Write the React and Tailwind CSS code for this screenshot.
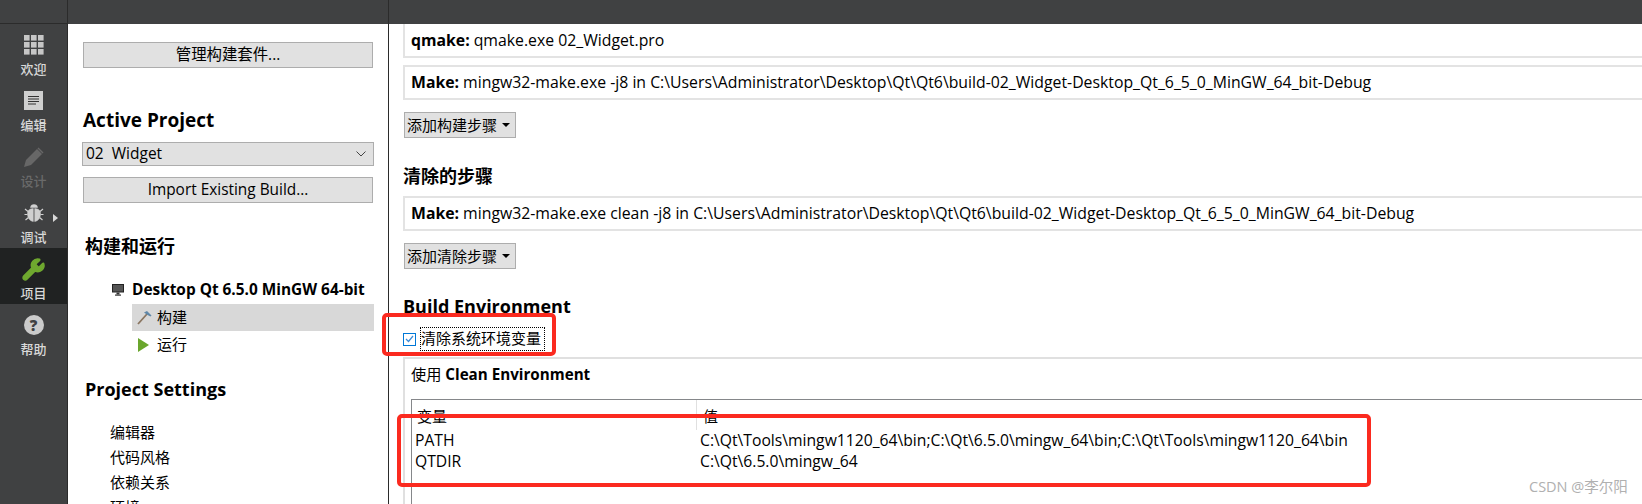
import { Wrench } from 'lucide-react'

// ── Sidebar icons ──────────────────────────────────────────────
function GridIcon() {
  const cells = [0, 7, 14]
  return (
    <svg width="20" height="20" viewBox="0 0 20 20" fill="#c6c6c6">
      {cells.map((y) => cells.map((x) => <rect key={`${x}-${y}`} x={x} y={y} width="5.6" height="5.6" />))}
    </svg>
  )
}

function EditIcon() {
  return (
    <svg width="20" height="20" viewBox="0 0 20 20">
      <rect width="19" height="19" fill="#cfcfcf" />
      <path d="M4 5.5h11M4 8h11M4 10.5h11M4 13h8" stroke="#333" strokeWidth="1" />
    </svg>
  )
}

function PencilIcon() {
  return (
    <svg width="20" height="20" viewBox="0 0 20 20" fill="#676767">
      <path d="M0 20l2-7L13 2l5 5L7 18z" />
      <path d="M14.5 0.5l5 5-1 1-5-5z" />
    </svg>
  )
}

function BugIcon() {
  return (
    <svg width="20" height="20" viewBox="0 0 20 20" fill="#d0d0d0" stroke="#d0d0d0">
      <path d="M6.5 4.5a3.5 3 0 0 1 7 0z" strokeWidth="0.5" />
      <path d="M9.3 5.5v13C6 18 3.5 15 3.5 11S5 6 9.3 5.5z" strokeWidth="0.5" />
      <path d="M10.7 5.5v13c3.300-.5 5.800-3.500 5.800-7.500S15 6 10.700 5.500z" strokeWidth="0.5" />
      <path d="M1 6l3 2.500M19 6l-3 2.500M0.500 11.500h3M19.500 11.500h-3M1.500 17l3-2.500M18.500 17l-3-2.500" strokeWidth="1.200" fill="none" />
    </svg>
  )
}

function NavItem({ icon, label, active, disabled, arrow }) {
  return (
    <div
      className={[
        'relative flex h-14 flex-col items-center pt-[11px]',
        active ? 'bg-[#202222]' : '',
      ].join(' ')}
    >
      <div className="flex h-5 w-5 items-center justify-center">{icon}</div>
      <span
        className={[
          'mt-[5px] text-[13px] leading-[18px] font-medium',
          disabled ? 'text-[#6a6a6a]' : 'text-[#d8d8d8]',
        ].join(' ')}
      >
        {label}
      </span>
      {arrow && (
        <span className="absolute top-[22px] left-[53px] h-0 w-0 border-y-[4px] border-l-[5px] border-y-transparent border-l-[#d8d8d8]" />
      )}
    </div>
  )
}

function QtButton({ children, className }) {
  return (
    <div
      className={[
        'flex items-center justify-center border border-[#adadad] bg-[#e1e1e1] text-[15.4px] text-black',
        className,
      ].join(' ')}
    >
      {children}
    </div>
  )
}

function MenuButton({ label }) {
  return (
    <div className="ml-px flex h-[26px] w-[112px] items-center gap-[5px] border border-[#adadad] bg-[#e1e1e1] pl-[2px] text-[15px] text-black">
      <span>{label}</span>
      <span className="h-0 w-0 border-x-[4px] border-t-[4px] border-x-transparent border-t-black" />
    </div>
  )
}

function StepBox({ name, text, className }) {
  return (
    <div
      className={[
        'flex items-center border-2 border-r-0 border-[#e3e3e3] pl-[6px] text-[15.8px] whitespace-nowrap text-black',
        className,
      ].join(' ')}
    >
      <b className="mr-[4px] font-bold">{name}</b>
      <span>{text}</span>
    </div>
  )
}

const SETTINGS = ['编辑器', '代码风格', '依赖关系', '环境']

export default function App() {
  return (
    <div className="relative flex h-[504px] w-[1642px] flex-col overflow-hidden bg-white font-['Open_Sans','Noto_Sans_CJK_SC',sans-serif] text-black">
      {/* ── Top bar ─────────────────────────────────────────────── */}
      <div className="flex h-6 shrink-0 bg-[#404142]">
        <div className="h-6 w-[68px] border-r border-b border-[#2b2b2b]" />
        <div className="h-6 w-[321px] border-r border-[#2b2b2b]" />
      </div>

      <div className="flex min-h-0 flex-1">
        {/* ── Mode sidebar ────────────────────────────────────── */}
        <div className="w-[68px] shrink-0 border-r border-[#2b2b2b] bg-[#404142]">
          <NavItem icon={<GridIcon />} label="欢迎" />
          <NavItem icon={<EditIcon />} label="编辑" />
          <NavItem icon={<PencilIcon />} label="设计" disabled />
          <NavItem icon={<BugIcon />} label="调试" arrow />
          <NavItem
            icon={<Wrench size={25} strokeWidth={1.5} color="#6fa82f" fill="#6fa82f" className="shrink-0" />}
            label="项目"
            active
          />
          <NavItem
            icon={
              <div className="flex h-5 w-5 shrink-0 items-center justify-center rounded-full bg-[#cbcbcb] text-[15px] leading-none font-extrabold text-[#404142]">
                ?
              </div>
            }
            label="帮助"
          />
        </div>

        {/* ── Project panel ───────────────────────────────────── */}
        <div className="w-[321px] shrink-0 border-r border-[#2b2b2b] pl-[14px]">
          <QtButton className="mt-[18px] ml-px h-[26px] w-[290px]">管理构建套件...</QtButton>

          <div className="mt-[40px] ml-px text-[19px] leading-6 font-bold">Active Project</div>
          <div className="mt-[10px] flex h-6 w-[292px] items-center justify-between border border-[#adadad] bg-[#e1e1e1] pr-[7px] pl-[3px] text-[15.5px]">
            <span>02 &nbsp;Widget</span>
            <svg width="10" height="6" viewBox="0 0 10 6" fill="none" stroke="#444" strokeWidth="1">
              <path d="M0.500 0.500L5 5l4.500-4.500" />
            </svg>
          </div>
          <QtButton className="mt-[11px] ml-px h-[26px] w-[290px]">Import Existing Build...</QtButton>

          <div className="mt-[31px] ml-[3px] text-[18px] leading-6 font-bold">构建和运行</div>

          <div className="mt-[20px] flex h-6 items-center">
            <svg className="ml-[30px]" width="12" height="12" viewBox="0 0 12 12" fill="#333">
              <rect x="0.500" y="0.500" width="11" height="7.500" fill="#555" stroke="#222" />
              <rect x="4.500" y="8.500" width="3" height="2" />
              <rect x="3" y="10.500" width="6" height="1.200" />
            </svg>
            <span className="ml-2 text-[15.4px] font-bold whitespace-nowrap">Desktop Qt 6.5.0 MinGW 64-bit</span>
          </div>
          <div className="mt-[2px] ml-[50px] flex h-[27px] w-[242px] items-center bg-[#d8d8d8] pl-[5px] text-[15px]">
            <svg width="15" height="15" viewBox="0 0 15 15" fill="none">
              <path d="M1 14L10 4" stroke="#8a7560" strokeWidth="1.800" />
              <path d="M7 2.500l3-1.500 4.500 4.500-1 1-3-1.500z" fill="#5f87a8" />
            </svg>
            <span className="ml-[5px]">构建</span>
          </div>
          <div className="ml-[50px] flex h-[27px] items-center pl-[6px] text-[15px]">
            <span className="h-0 w-0 border-y-[7px] border-l-[11px] border-y-transparent border-l-[#6aa62d]" />
            <span className="ml-2">运行</span>
          </div>

          <div className="mt-[19px] ml-[3px] text-[18px] leading-6 font-bold">Project Settings</div>
          <div className="mt-[19px] ml-[28px]">
            {SETTINGS.map((s) => (
              <div key={s} className="h-[25px] text-[15px] leading-[25px]">
                {s}
              </div>
            ))}
          </div>
        </div>

        {/* ── Build settings ──────────────────────────────────── */}
        <div className="min-w-0 flex-1 pl-[14px]">
          <StepBox className="h-[34px] border-t-0 pt-[2px]" name="qmake:" text="qmake.exe 02_Widget.pro" />
          <StepBox
            className="mt-[7px] h-[35px]"
            name="Make:"
            text="mingw32-make.exe -j8 in C:\Users\Administrator\Desktop\Qt\Qt6\build-02_Widget-Desktop_Qt_6_5_0_MinGW_64_bit-Debug"
          />
          <div className="mt-3">
            <MenuButton label="添加构建步骤" />
          </div>

          <div className="mt-[26px] h-6 text-[18px] leading-6 font-bold">清除的步骤</div>
          <StepBox
            className="mt-[8px] h-[35px]"
            name="Make:"
            text="mingw32-make.exe clean -j8 in C:\Users\Administrator\Desktop\Qt\Qt6\build-02_Widget-Desktop_Qt_6_5_0_MinGW_64_bit-Debug"
          />
          <div className="mt-3">
            <MenuButton label="添加清除步骤" />
          </div>

          <div className="mt-[25px] h-6 text-[18px] leading-6 font-bold">Build Environment</div>
          <div className="mt-[9px] flex h-[24px] items-center">
            <div className="flex h-[13px] w-[13px] items-center justify-center border border-[#0078d7]">
              <svg width="9" height="8" viewBox="0 0 9 8" fill="none" stroke="#3a8ad6" strokeWidth="1.200">
                <path d="M1 4l2.500 2.500L8 1" />
              </svg>
            </div>
            <div className="ml-1 flex h-[24px] w-[125px] items-center border border-dotted border-black pb-px text-[15px] whitespace-nowrap">
              清除系统环境变量
            </div>
          </div>

          <div className="mt-[6px] border-t-2 border-l-2 border-[#e0e0e0] pl-[6px]">
            <div className="mt-[3px] h-[24px] text-[15.2px] leading-6">
              使用 <b className="font-bold">Clean Environment</b>
            </div>
            <div className="mt-[13px] h-[120px] border-t border-l border-[#85878a]">
              <div className="flex h-[30px] text-[15px]">
                <div className="w-[285px] border-r border-[#e0e0e0] pt-[6px] pl-[5px] leading-5">变量</div>
                <div className="pt-[6px] pl-[6px] leading-5">值</div>
              </div>
              <div className="flex h-[21px] text-[15.7px] leading-[21px] whitespace-nowrap">
                <div className="w-[288px] pl-[3px]">PATH</div>
                <div>C:\Qt\Tools\mingw1120_64\bin;C:\Qt\6.5.0\mingw_64\bin;C:\Qt\Tools\mingw1120_64\bin</div>
              </div>
              <div className="flex h-[21px] text-[15.7px] leading-[21px] whitespace-nowrap">
                <div className="w-[288px] pl-[3px]">QTDIR</div>
                <div>C:\Qt\6.5.0\mingw_64</div>
              </div>
            </div>
          </div>
        </div>
      </div>

      {/* ── Annotation overlays ─────────────────────────────────── */}
      <div className="absolute top-[313px] left-[382px] h-[43px] w-[174px] rounded-[5px] border-[4px] border-[#fb2a1f]" />
      <div className="absolute top-[414px] left-[397px] h-[73px] w-[974px] rounded-[5px] border-[4px] border-[#fb2a1f]" />
      <div className="absolute top-[477px] left-[1529px] text-[14.5px] leading-5 whitespace-nowrap text-[#b0b0b0]">
        CSDN @李尔阳
      </div>
    </div>
  )
}
